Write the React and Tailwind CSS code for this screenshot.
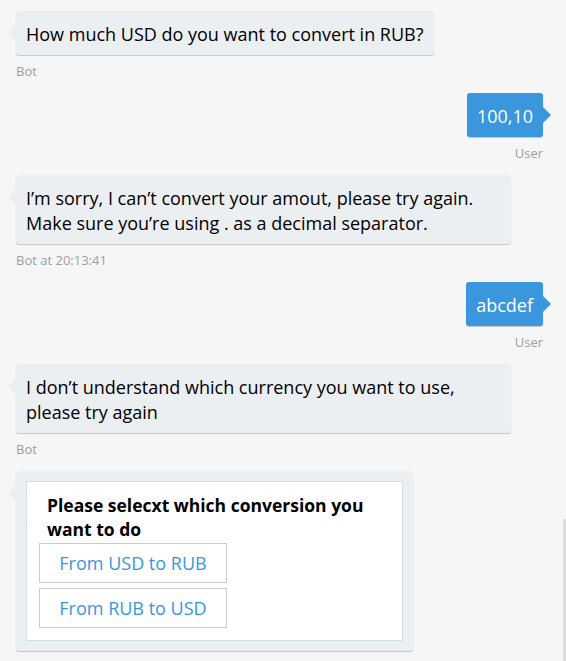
import React from "react";

const font = { fontFamily: '"Open Sans", "Noto Sans", sans-serif' };

function BotBubble({ children, className = "" }) {
  return (
    <div className={"relative bg-[#eceff1] rounded-[3px] shadow-[0_1px_1px_rgba(0,0,0,0.2)] " + className}>
      <span className="absolute -left-2 top-[14px] w-0 h-0 border-y-8 border-y-transparent border-r-8 border-r-[#eceff1]" />
      {children}
    </div>
  );
}

function UserBubble({ text }) {
  return (
    <div className="relative bg-[#3a96dd] rounded-[3px] shadow-[0_1px_1px_rgba(0,0,0,0.2)] text-white text-[18px] leading-[25px] px-[10px] pt-[11px] pb-[8px]">
      <span className="absolute -right-2 top-[14px] w-0 h-0 border-y-8 border-y-transparent border-l-8 border-l-[#3a96dd]" />
      {text}
    </div>
  );
}

function Label({ children, right }) {
  return (
    <div className={"text-[13px] leading-[17px] text-[#9e9e9e] mt-2 " + (right ? "text-right" : "")}>
      {children}
    </div>
  );
}

const textBubble = "px-[10px] pt-[11px] pb-[8px] text-[18px] leading-[25px] text-black";

export default function App() {
  return (
    <div style={font} className="w-[566px] h-[661px] bg-[#f6f6f6] overflow-hidden relative">
      <div className="flex flex-col pl-4 pr-[23px] pt-[11px] gap-[13px]">
        <div className="flex flex-col items-start">
          <BotBubble className={textBubble}>How much USD do you want to convert in RUB?</BotBubble>
          <Label>Bot</Label>
        </div>

        <div className="flex flex-col items-end">
          <UserBubble text="100,10" />
          <Label right>User</Label>
        </div>

        <div className="flex flex-col items-start">
          <BotBubble className={"w-[495px] " + textBubble}>
            I’m sorry, I can’t convert your amout, please try again.
            <br />
            Make sure you’re using . as a decimal separator.
          </BotBubble>
          <Label>Bot at 20:13:41</Label>
        </div>

        <div className="flex flex-col items-end">
          <UserBubble text="abcdef" />
          <Label right>User</Label>
        </div>

        <div className="flex flex-col items-start">
          <BotBubble className={"w-[495px] " + textBubble}>
            I don’t understand which currency you want to use,
            <br />
            please try again
          </BotBubble>
          <Label>Bot</Label>
        </div>

        <div className="flex flex-col items-start">
          <BotBubble className="w-[397px] p-[10px]">
            <div className="bg-white border border-[#d2dde5] px-3 pt-[11px] pb-3">
              <div className="px-2 text-[17.5px] leading-[24px] font-bold text-black">
                Please selecxt which conversion you
                <br />
                want to do
              </div>
              <div className="flex flex-col gap-[5px] mt-[2px]">
                <button className="w-[188px] h-[40px] border border-[#cccccc] bg-white text-[#3a96dd] text-[18px]">
                  From USD to RUB
                </button>
                <button className="w-[188px] h-[40px] border border-[#cccccc] bg-white text-[#3a96dd] text-[18px]">
                  From RUB to USD
                </button>
              </div>
            </div>
          </BotBubble>
        </div>
      </div>
      <div className="absolute right-0 top-[519px] w-[3px] h-[142px] bg-[#dadcdf]" />
    </div>
  );
}
